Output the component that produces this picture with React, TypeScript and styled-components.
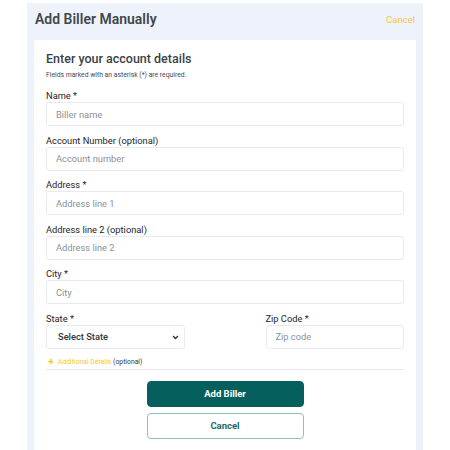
import { createGlobalStyle } from 'styled-components';
import styled from 'styled-components';

const GlobalStyle = createGlobalStyle`
  html, body {
    margin: 0;
    padding: 0;
    background: #ffffff;
    overflow: hidden;
  }
  body {
    font-family: Roboto, "Liberation Sans", sans-serif;
    color: #333a40;
  }
  * {
    box-sizing: border-box;
  }
`;

const Panel = styled.div`
  margin: 3px 27px 0;
  width: 396px;
  height: 447px;
  background: #eef3fb;
  display: flex;
  flex-direction: column;
`;

const Header = styled.div`
  height: 37px;
  padding: 0 8px 5px;
  display: flex;
  align-items: center;
  justify-content: space-between;
`;

const Title = styled.h1`
  margin: 0;
  font-size: 14px;
  font-weight: 600;
  color: #41464c;
`;

const HeaderLink = styled.a`
  font-size: 9.5px;
  color: #f6c544;
  cursor: pointer;
`;

const Card = styled.div`
  flex: 1;
  margin: 0 7px;
  background: #ffffff;
  padding: 11px 12px 0;
`;

const Heading = styled.h2`
  margin: 0;
  font-size: 12.5px;
  line-height: 16px;
  font-weight: 500;
  color: #3a3f45;
`;

const Note = styled.p`
  margin: 3px 0 0;
  font-size: 6.8px;
  line-height: 10px;
  color: #444a50;
`;

const Field = styled.div<{ $first?: boolean }>`
  margin-top: ${(p) => (p.$first ? '9px' : '7.6px')};
  display: flex;
  flex-direction: column;
`;

const Label = styled.label`
  font-size: 9.3px;
  line-height: 13px;
  font-weight: 400;
  color: #1f2327;
`;

const Input = styled.input`
  height: 24px;
  width: 100%;
  border: 1px solid #e8ebef;
  border-radius: 3px;
  padding: 0 9px;
  font-family: inherit;
  font-size: 9.3px;
  color: #333;
  background: #fff;
  outline: none;
  &::placeholder {
    color: #8b9198;
  }
`;

const SelectBox = styled.div`
  position: relative;
  height: 24px;
  border: 1px solid #e8ebef;
  border-radius: 3px;
  padding: 0 11px;
  display: flex;
  align-items: center;
  font-size: 9.3px;
  font-weight: 500;
  color: #30353a;
`;

const Chevron = styled.svg`
  position: absolute;
  right: 5px;
  top: 9px;
`;

const Row = styled.div`
  display: grid;
  grid-template-columns: 1fr 1fr;
  column-gap: 81px;
`;

const Extra = styled.div`
  margin-top: 9px;
  height: 12px;
  display: flex;
  align-items: center;
  gap: 4px;
  padding-left: 2px;
  border-bottom: 1px solid #e6e9ed;
  padding-bottom: 2px;
  font-size: 6.8px;
`;

const Plus = styled.span`
  color: #f6c544;
  font-size: 11px;
  font-weight: 700;
  line-height: 10px;
`;

const ExtraLink = styled.span`
  color: #f6c544;
`;

const Muted = styled.span`
  color: #333a40;
  margin-left: -2px;
`;

const Actions = styled.div`
  margin-top: 11px;
  display: flex;
  flex-direction: column;
  align-items: center;
  gap: 6px;
`;

const Button = styled.button<{ $primary?: boolean }>`
  width: 157px;
  height: 26px;
  border-radius: 4px;
  font-family: inherit;
  font-size: 9.5px;
  font-weight: 700;
  cursor: pointer;
  background: ${(p) => (p.$primary ? '#045f5d' : '#ffffff')};
  color: ${(p) => (p.$primary ? '#ffffff' : '#1d6966')};
  border: 1px solid ${(p) => (p.$primary ? '#045f5d' : '#8fbfbe')};
`;

const fields = [
  { label: 'Name *', placeholder: 'Biller name' },
  { label: 'Account Number (optional)', placeholder: 'Account number' },
  { label: 'Address *', placeholder: 'Address line 1' },
  { label: 'Address line 2 (optional)', placeholder: 'Address line 2' },
  { label: 'City *', placeholder: 'City' },
];

export default function App() {
  return (
    <>
      <GlobalStyle />
      <Panel>
        <Header>
          <Title>Add Biller Manually</Title>
          <HeaderLink>Cancel</HeaderLink>
        </Header>
        <Card>
          <Heading>Enter your account details</Heading>
          <Note>Fields marked with an asterisk (*) are required.</Note>
          {fields.map((f, i) => (
            <Field key={f.label} $first={i === 0}>
              <Label>{f.label}</Label>
              <Input placeholder={f.placeholder} />
            </Field>
          ))}
          <Row>
            <Field>
              <Label>State *</Label>
              <SelectBox>
                Select State
                <Chevron width="7" height="5" viewBox="0 0 7 5">
                  <path d="M1 1 L3.5 3.5 L6 1" fill="none" stroke="#333" strokeWidth="1.4" />
                </Chevron>
              </SelectBox>
            </Field>
            <Field>
              <Label>Zip Code *</Label>
              <Input placeholder="Zip code" />
            </Field>
          </Row>
          <Extra>
            <Plus>+</Plus>
            <ExtraLink>Additional Details</ExtraLink>
            <Muted>(optional)</Muted>
          </Extra>
          <Actions>
            <Button $primary>Add Biller</Button>
            <Button>Cancel</Button>
          </Actions>
        </Card>
      </Panel>
    </>
  );
}
